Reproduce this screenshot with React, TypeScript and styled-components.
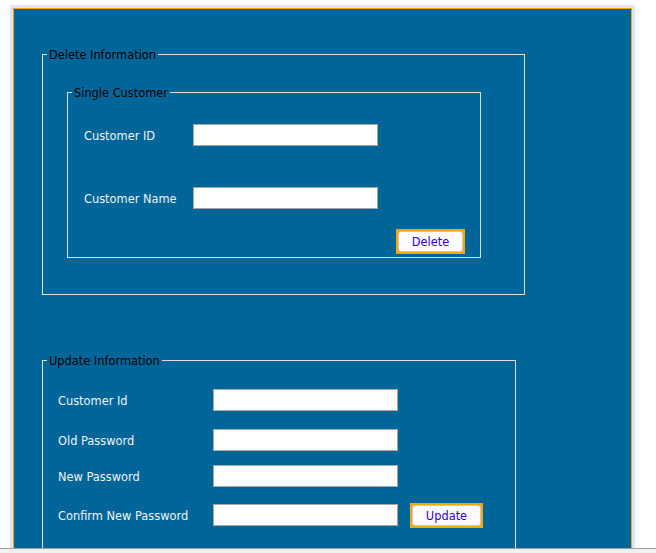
import React from "react";
import styled, { createGlobalStyle } from "styled-components";

const Global = createGlobalStyle`
  html, body { margin: 0; padding: 0; background: #ffffff; }
  body { font-family: "DejaVu Sans", Verdana, sans-serif; font-size: 11.4px; overflow: hidden; }
`;

const Screen = styled.div`
  height: 553px;
  display: flex;
  flex-direction: column;
`;

const Viewport = styled.div`
  flex: 1;
  overflow: hidden;
  padding: 5px 0 0 10px;
`;

const ScrollStrip = styled.div`
  height: 4px;
  background: #f0f0f0;
  border-top: 1px solid #a0a0a0;
`;

const Frame = styled.div`
  width: 625px;
  box-sizing: border-box;
  border: 3px solid #e2e2f8;
  border-bottom: none;
`;

const Panel = styled.div`
  background: #006699;
  border: 1px solid #ffa500;
  border-bottom: none;
  padding: 37px 0 0 28px;
  height: 600px;
  box-sizing: border-box;
`;

const Fieldset = styled.fieldset<{ $w: number; $h: number; $mt?: number }>`
  box-sizing: border-box;
  width: ${(p) => p.$w}px;
  height: ${(p) => p.$h}px;
  margin: ${(p) => p.$mt ?? 0}px 0 0 0;
  padding: 0;
  border: 1px solid #dddddd;
  min-width: 0;
`;

const FieldBody = styled.div<{ $pt: number; $pl: number; $pr?: number }>`
  padding: ${(p) => p.$pt}px ${(p) => p.$pr ?? 0}px 0 ${(p) => p.$pl}px;
`;

const Legend = styled.legend`
  margin-left: 4px;
  padding: 2px 2px 0;
  line-height: 14px;
  color: #000000;
`;

const Row = styled.div<{ $mt: number; $label: number; $h?: number }>`
  display: flex;
  align-items: center;
  margin-top: ${(p) => p.$mt}px;
  height: ${(p) => p.$h ?? 22}px;
  & > label { width: ${(p) => p.$label}px; }
`;

const Label = styled.label`
  color: #f2f2f2;
  flex: none;
  padding-top: 2px;
`;

const Input = styled.input`
  box-sizing: border-box;
  width: 185px;
  height: 22px;
  margin: 0;
  border: 1px solid #a6a6a6;
  background: #ffffff;
  padding: 0 3px;
  font: inherit;
`;

const ButtonRow = styled.div<{ $mt: number }>`
  display: flex;
  justify-content: flex-end;
  margin-top: ${(p) => p.$mt}px;
`;

const Button = styled.button<{ $w: number; $ml?: number }>`
  box-sizing: border-box;
  width: ${(p) => p.$w}px;
  height: 25px;
  margin: 0 0 0 ${(p) => p.$ml ?? 0}px;
  padding: 0;
  border: 2px solid #ffa500;
  background: #ffa500;
  cursor: pointer;
  display: flex;
`;

const ButtonFace = styled.span`
  flex: 1;
  display: flex;
  align-items: center;
  justify-content: center;
  padding-top: 1px;
  background: #fcfcfc;
  border: 1px solid #c8c8c8;
  border-radius: 3px;
  color: #3300cc;
  font-family: "DejaVu Sans", Verdana, sans-serif;
  font-size: 11.4px;
`;

export default function App() {
  return (
    <>
      <Global />
      <Screen>
        <Viewport>
          <Frame>
            <Panel>
              <Fieldset $w={483} $h={249}>
                <Legend>Delete Information</Legend>
                <FieldBody $pt={22} $pl={24}>
                  <Fieldset $w={414} $h={174}>
                    <Legend>Single Customer</Legend>
                    <FieldBody $pt={24} $pl={16} $pr={15}>
                      <Row $mt={0} $label={109}>
                        <Label>Customer ID</Label>
                        <Input type="text" />
                      </Row>
                      <Row $mt={41} $label={109}>
                        <Label>Customer Name</Label>
                        <Input type="text" />
                      </Row>
                      <ButtonRow $mt={20}>
                        <Button $w={69}>
                          <ButtonFace>Delete</ButtonFace>
                        </Button>
                      </ButtonRow>
                    </FieldBody>
                  </Fieldset>
                </FieldBody>
              </Fieldset>
              <Fieldset $w={474} $h={240} $mt={57}>
                <Legend>Update Information</Legend>
                <FieldBody $pt={21} $pl={15}>
                  <Row $mt={0} $label={155}>
                    <Label>Customer Id</Label>
                    <Input type="text" />
                  </Row>
                  <Row $mt={18} $label={155}>
                    <Label>Old Password</Label>
                    <Input type="password" />
                  </Row>
                  <Row $mt={14} $label={155}>
                    <Label>New Password</Label>
                    <Input type="password" />
                  </Row>
                  <Row $mt={16} $label={155} $h={24}>
                    <Label>Confirm New Password</Label>
                    <Input type="password" />
                    <Button $w={73} $ml={12}>
                      <ButtonFace>Update</ButtonFace>
                    </Button>
                  </Row>
                </FieldBody>
              </Fieldset>
            </Panel>
          </Frame>
        </Viewport>
        <ScrollStrip />
      </Screen>
    </>
  );
}
